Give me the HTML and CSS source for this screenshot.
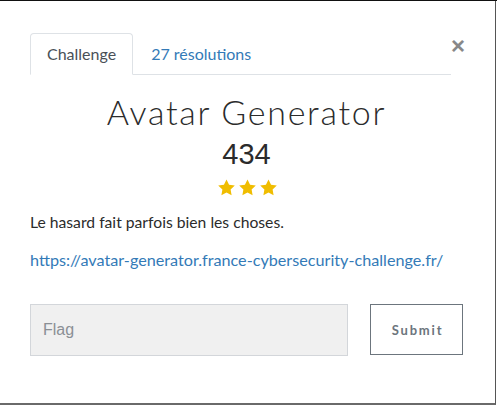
FILE: index.html
```html
<!DOCTYPE html>
<html lang="fr">
<head>
<meta charset="utf-8">
<title>Avatar Generator</title>
<link rel="stylesheet" href="styles.css">
</head>
<body>
<div class="modal">
  <div class="header">
    <ul class="tabs">
      <li class="tab active">Challenge</li>
      <li class="tab link">27 résolutions</li>
    </ul>
    <button class="close" aria-label="Fermer">&times;</button>
  </div>
  <h1 class="title">Avatar Generator</h1>
  <div class="points">434</div>
  <div class="stars">
    <svg viewBox="0 0 24 24" class="star"><path d="M12 0.6l3.6 7.4 8.1 1.1-5.9 5.7 1.4 8.1L12 19.1l-7.2 3.8 1.4-8.1L0.3 9.1l8.1-1.1z"/></svg>
    <svg viewBox="0 0 24 24" class="star"><path d="M12 0.6l3.6 7.4 8.1 1.1-5.9 5.7 1.4 8.1L12 19.1l-7.2 3.8 1.4-8.1L0.3 9.1l8.1-1.1z"/></svg>
    <svg viewBox="0 0 24 24" class="star"><path d="M12 0.6l3.6 7.4 8.1 1.1-5.9 5.7 1.4 8.1L12 19.1l-7.2 3.8 1.4-8.1L0.3 9.1l8.1-1.1z"/></svg>
  </div>
  <p class="desc">Le hasard fait parfois bien les choses.</p>
  <p class="url"><a href="#">https://avatar-generator.france-cybersecurity-challenge.fr/</a></p>
  <form class="flag-form">
    <input class="flag-input" type="text" placeholder="Flag">
    <button class="submit" type="button">Submit</button>
  </form>
</div>
</body>
</html>
```
FILE: styles.css
```css
html, body {
  margin: 0;
  padding: 0;
  background: #fff;
}
body {
  border-top: 1px solid #111;
  width: 497px;
  height: 405px;
  box-sizing: border-box;
  overflow: hidden;
  font-family: Lato, "Liberation Sans", sans-serif;
}
.modal {
  width: 496px;
  height: 404px;
  box-sizing: border-box;
  border-right: 1px solid #555;
  border-bottom: 2px solid #6a6a6a;
  padding: 32px 32px 0 30px;
  background: #fff;
}
.header {
  display: flex;
  align-items: flex-start;
}
.tabs {
  list-style: none;
  margin: 0;
  padding: 0;
  display: flex;
  width: 421px;
  border-bottom: 1px solid #dee2e6;
}
.tab {
  font-size: 16px;
  line-height: 20px;
  padding: 10px 16px 10px 16px;
  margin-bottom: -1px;
  border: 1px solid transparent;
  border-radius: 4px 4px 0 0;
}
.tab.active {
  color: #495057;
  border-color: #dee2e6 #dee2e6 #fff;
  background: #fff;
}
.tab.link {
  color: #337ab7;
  padding-left: 17px;
}
.close {
  border: 0;
  background: none;
  padding: 0;
  margin: 1px 0 0 0;
  font-family: "Liberation Sans", Arial, sans-serif;
  font-size: 24px;
  font-weight: bold;
  line-height: 24px;
  color: #888;
  width: 12px;
}
.title {
  margin: 17px 0 0 0;
  text-align: center;
  font-weight: 300;
  font-size: 34px;
  line-height: 40px;
  letter-spacing: 1.7px;
  color: #2b2b2b;
}
.points {
  text-align: center;
  font-family: "Liberation Sans", Arial, sans-serif;
  font-size: 29px;
  line-height: 34px;
  color: #2b2b2b;
  margin-top: 5px;
}
.stars {
  display: flex;
  justify-content: center;
  gap: 4px;
  margin-top: 8px;
  padding-left: 1px;
}
.star {
  width: 17px;
  height: 17px;
  fill: #f0bd00;
}
.desc {
  margin: 15px 0 0 0;
  font-size: 15.7px;
  line-height: 22px;
  color: #2b2b2b;
}
.url {
  margin: 16px 0 0 0;
  font-size: 16.2px;
  line-height: 22px;
}
.url a {
  color: #337ab7;
  text-decoration: none;
}
.flag-form {
  display: flex;
  justify-content: space-between;
  margin-top: 33px;
}
.flag-input {
  width: 318px;
  height: 52px;
  box-sizing: border-box;
  border: 1px solid #d3d6da;
  background: #f0f0f0;
  padding: 0 12px;
  font-family: "Liberation Sans", Arial, sans-serif;
  font-size: 16px;
  color: #333;
  margin: 0;
}
.flag-input::placeholder {
  color: #8a8f95;
}
.submit {
  width: 93px;
  height: 51px;
  box-sizing: border-box;
  border: 1px solid #6c757d;
  background: #fff;
  color: #6c757d;
  font-family: Lato, "Liberation Sans", sans-serif;
  font-weight: bold;
  font-size: 13px;
  letter-spacing: 1.8px;
  padding-left: 8px;
  margin: 0 0 0 0;
}
```
